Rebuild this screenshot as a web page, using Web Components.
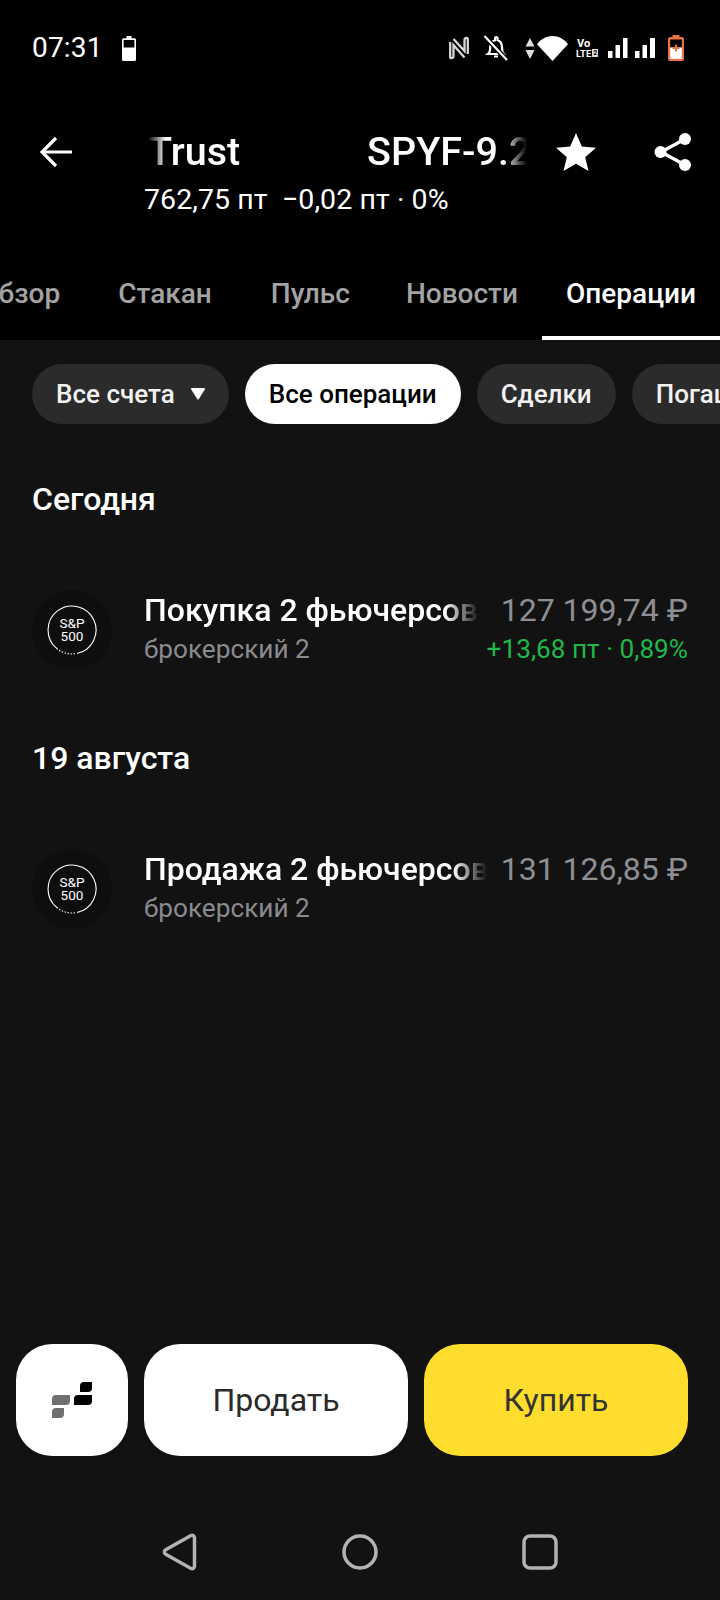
<!DOCTYPE html>
<html lang="ru"><head><meta charset="utf-8"><title>SPYF</title>
<style>
html,body{margin:0;padding:0;background:#121212}
body{width:720px;height:1600px;overflow:hidden;font-family:Roboto,"Liberation Sans",sans-serif;color:#fff}
#app{display:flex;flex-direction:column;width:720px;height:1600px}
</style></head><body>
<div id="app">
<status-bar></status-bar>
<instrument-header></instrument-header>
<tab-strip>
<tab-item style="margin-right:10px">Обзор</tab-item><tab-item style="margin-right:11px">Стакан</tab-item><tab-item style="margin-right:8px">Пульс</tab-item><tab-item>Новости</tab-item><tab-item active>Операции</tab-item>
</tab-strip>
<ops-body>
<chip-row>
<filter-chip caret>Все счета</filter-chip><filter-chip active>Все операции</filter-chip><filter-chip>Сделки</filter-chip><filter-chip>Погашения</filter-chip>
</chip-row>
<day-title>Сегодня</day-title>
<op-row title-text="Покупка 2 фьючерсов" amount="127 199,74 ₽" sub="брокерский 2" delta="+13,68 пт · 0,89%"></op-row>
<day-title second>19 августа</day-title>
<op-row style="--gap:14px" title-text="Продажа 2 фьючерсов" amount="131 126,85 ₽" sub="брокерский 2"></op-row>
</ops-body>
<action-bar></action-bar>
<nav-bar></nav-bar>
</div>
<script>
function def(name, html){
  customElements.define(name, class extends HTMLElement{
    constructor(){super();const r=this.attachShadow({mode:'open'});if(typeof html!=='function')r.innerHTML=html;}
    connectedCallback(){
      if(typeof html==='function'&&!this._d){this._d=1;this.shadowRoot.innerHTML=html(this);}
    }
  });
}
def('status-bar',`<style>
:host{display:flex;align-items:center;height:96px;background:#000;padding:0 36px 0 32px;box-sizing:border-box;flex:none}
.t{font:400 28px/32px Roboto,sans-serif;color:#fff;letter-spacing:.2px}
svg{display:block;flex:none}
.b{margin-left:19px}
.sp{flex:1}
.v{flex:none;width:22px;margin:0 10px 0 8px;color:#fff;display:flex;flex-direction:column;align-items:flex-start;line-height:9px}
.v i{font:700 11px/10px Roboto,sans-serif;margin-left:1px}
.v b{font:700 9.500px/9px Roboto,sans-serif;display:flex;gap:1px;align-items:center}
.v u{text-decoration:none;background:#ddd;color:#000;font-size:7px;line-height:8px;padding:0 1px}
</style>
<span class="t">07:31</span>
<svg class="b" width="14" height="25" viewBox="0 0 14 25"><path fill="#fff" d="M4.500 0h5v2.200H12.500a1.500 1.500 0 0 1 1.500 1.500V23.500a1.500 1.500 0 0 1-1.500 1.500H1.500A1.500 1.500 0 0 1 0 23.500V3.700A1.500 1.500 0 0 1 1.500 2.200H4.500z"/><rect x="1.600" y="4" width="10.800" height="7.500" fill="#000"/></svg>
<span class="sp"></span>
<svg width="20" height="24" viewBox="0 0 20 24" style="margin-right:14px"><path d="M4.500 3 15.500 15V4a2.200 2.200 0 0 1 2-2.200c.8 0 1.300.6 1.300 1.500V18M15.500 21.500 4.500 9v11a2.200 2.200 0 0 1-2 2.200c-.8 0-1.300-.6-1.300-1.500V6" fill="none" stroke="#d8d8d8" stroke-width="2.300"/></svg>
<svg width="25" height="26" viewBox="0 0 25 26" style="margin-right:17px"><path d="M5 19c2-1.500 2.200-3.500 2.200-6.500C7.200 8.500 9 6 12 5.200V3.500a1.300 1.300 0 0 1 2.600 0v1.700C17.500 6 19 8.500 19 12.500c0 3 .4 5 1.800 6.500zM11 21.500h4" fill="none" stroke="#fff" stroke-width="2.200"/><path d="M1.500 1 24 25" stroke="#000" stroke-width="5"/><path d="M1.500 1 24 25" stroke="#fff" stroke-width="2.200"/></svg>
<svg width="10" height="21" viewBox="0 0 10 21" style="margin-right:2px"><path fill="#ddd" d="M5 0l4.500 8.500h-9zM.5 12h9L5 21z"/></svg>
<svg width="31" height="25" viewBox="0 0 31 25"><path fill="#fff" d="M15.500 25 0 8.300C3.500 3.200 9.500 0 15.500 0s12 3.200 15.500 8.300z"/></svg>
<span class="v"><i>Vo</i><b>LTE<u>2</u></b></span>
<svg width="48" height="21" viewBox="0 0 48 21" style="margin-right:12px"><g fill="#fff"><rect x="0" y="13" width="4.500" height="7"/><rect x="7.500" y="7" width="4.500" height="13"/><rect x="15" y="0" width="4.500" height="20"/><rect x="27" y="13" width="4.500" height="7"/><rect x="34.500" y="7" width="4.500" height="13"/><rect x="42" y="0" width="5" height="20"/></g></svg>
<svg width="16" height="26" viewBox="0 0 16 26"><path fill="#e8734a" d="M4.500 0h7v2h2.500A2 2 0 0 1 16 4v20a2 2 0 0 1-2 2H2a2 2 0 0 1-2-2V4a2 2 0 0 1 2-2h2.500z"/><rect x="2.200" y="4.500" width="11.600" height="8" fill="#000"/><rect x="2.200" y="12.500" width="11.600" height="11.300" fill="#fff"/><path d="M8 9.500v7M4.500 13h7" stroke="#e8734a" stroke-width="2.200"/></svg>`);

def('instrument-header',`<style>
:host{display:grid;grid-template-columns:148px 379px 1fr;grid-template-rows:60px 36px;background:#000;height:154px;flex:none;box-sizing:border-box;padding-top:26px;align-content:start}
.back{grid-row:1;grid-column:1;display:flex;align-items:center;padding-left:40px}
.title{grid-row:1;grid-column:2;overflow:hidden;display:flex;gap:127px;align-items:center;white-space:nowrap;font:500 39.500px/60px Roboto,sans-serif;color:#fff;
 -webkit-mask-image:linear-gradient(90deg,transparent 0,#000 18px,#000 calc(100% - 24px),transparent 100%);mask-image:linear-gradient(90deg,transparent 0,#000 18px,#000 calc(100% - 24px),transparent 100%)}
.acts{grid-row:1;grid-column:3;display:flex;align-items:center;justify-content:space-between;padding:0 28px 0 29px}
.sub{grid-row:2;grid-column:2 / 4;font:400 28.500px/36px Roboto,sans-serif;color:#fff;white-space:pre;margin-left:-4px;letter-spacing:.08px}
svg{display:block}
</style>
<div class="back"><svg width="33" height="32" viewBox="0 0 33 32"><path d="M32 16H3M16 2 2 16l14 14" fill="none" stroke="#fff" stroke-width="3.200"/></svg></div>
<div class="title"><span>Trust</span><span>SPYF-9.22</span></div>
<div class="acts">
<svg width="40" height="38" viewBox="0 0 40 38"><path fill="#fff" d="M20 0l5.800 13.600 14.200 1.200-10.800 9.400 3.300 13.800L20 30.700 7.500 38l3.300-13.800L0 14.800l14.200-1.200z"/></svg>
<svg width="38" height="40" viewBox="0 0 38 40"><path d="M31 7 7 20l24 13" fill="none" stroke="#fff" stroke-width="3.200"/><circle cx="31" cy="7" r="6" fill="#fff"/><circle cx="6.500" cy="20" r="6" fill="#fff"/><circle cx="31" cy="33" r="6" fill="#fff"/></svg>
</div>
<div class="sub">762,75 пт  −0,02 пт · 0%</div>`);

def('tab-strip',`<style>
:host{display:flex;justify-content:flex-end;overflow:hidden;background:#000;height:90px;flex:none;box-sizing:border-box}
</style><slot></slot>`);
def('tab-item',`<style>
:host{display:flex;flex:none;box-sizing:border-box;height:90px;padding:0 24px 2px;align-items:center;font:500 28px/32px Roboto,sans-serif;color:#a3a3a3}
:host([active]){color:#fff;padding:2px 0 0;border-bottom:4px solid #fff;width:178px;justify-content:center}
</style><slot></slot>`);

def('ops-body',`<style>:host{display:flex;flex-direction:column;flex:1;min-height:0;background:#121212}</style><slot></slot>`);
def('chip-row',`<style>:host{display:flex;gap:16px;overflow:hidden;padding:24px 0 0 32px;flex:none}</style><slot></slot>`);
def('filter-chip',el=>`<style>
:host{display:flex;flex:none;align-items:center;height:60px;box-sizing:border-box;padding:0 24px;border-radius:30px;background:#2b2b2b;color:#f2f2f2;font:500 26px/30px Roboto,sans-serif}
:host([active]){background:#fff;color:#000}
svg{margin-left:16px;display:block}
</style><slot></slot>${el.hasAttribute('caret')?'<svg width="14" height="12" viewBox="0 0 14 12"><path fill="#fff" d="M1 0h12a1 1 0 0 1 .8 1.500L7.800 11a1 1 0 0 1-1.600 0L.2 1.500A1 1 0 0 1 1 0z"/></svg>':''}`);
def('day-title',`<style>:host{display:block;font:500 32px/36px Roboto,sans-serif;color:#fff;margin:57px 0 0 32px}
:host([second]){margin-top:70px}</style><slot></slot>`);
def('sp-logo',`<style>:host{display:grid;flex:none;width:80px;height:80px;border-radius:50%;background:#0e0e0e;place-items:center}
svg,span{grid-area:1/1}
svg{display:block}
span{text-align:center;font:400 13.500px/13px Roboto,sans-serif;color:#fff}
</style><svg width="50" height="50" viewBox="0 0 50 50" fill="none" stroke="#fff" stroke-width="1.100"><path d="M10.100 43.800A24 24 0 1 1 30 48.500"/><path d="M28 48.800A24 24 0 0 1 10.100 43.800" stroke-dasharray="1.500 1.500"/></svg><span>S&amp;P<br>500</span>`);
def('op-row',el=>`<style>
:host{display:flex;align-items:center;margin:73px 32px 0 32px;height:80px;gap:32px}
.m{flex:1;min-width:0;display:flex;flex-direction:column}
.top{display:flex;gap:var(--gap,22px);align-items:center;height:38px}
.tt{flex:1;min-width:0;overflow:hidden;white-space:nowrap;font:500 32px/38px Roboto,sans-serif;color:#fff;
 -webkit-mask-image:linear-gradient(90deg,#000 calc(100% - 34px),transparent 100%);mask-image:linear-gradient(90deg,#000 calc(100% - 34px),transparent 100%)}
.am{flex:none;font:400 32px/38px Roboto,sans-serif;color:#8e8f94;white-space:nowrap}
.bot{display:flex;justify-content:space-between;align-items:center;height:40px;font:400 26.200px/40px Roboto,sans-serif;color:#8a8b90}
.d{color:#1fb84a}
</style><sp-logo></sp-logo><div class="m"><div class="top"><div class="tt">${el.getAttribute('title-text')||''}</div><div class="am">${el.getAttribute('amount')||''}</div></div>
<div class="bot"><span>${el.getAttribute('sub')||''}</span>${el.getAttribute('delta')?`<span class="d">${el.getAttribute('delta')}</span>`:''}</div></div>`);

def('action-bar',`<style>
:host{display:grid;grid-template-columns:112px 264px 264px;gap:16px;padding:0 32px 0 16px;height:112px;flex:none;background:#121212}
.b{border-radius:36px;background:#fff;color:#2a2a2a;display:flex;align-items:center;justify-content:center;font:400 32px/36px Roboto,sans-serif}
.y{background:#ffdd2d;color:#333}
</style>
<div class="b"><svg width="40" height="36" viewBox="0 0 40 36"><path fill="#000" d="M32 0h8v6a4 4 0 0 1-4 4h-8V4a4 4 0 0 1 4-4zM26 13h14v6a4 4 0 0 1-4 4H22v-6a4 4 0 0 1 4-4z"/><path fill="#6f6f6f" d="M4 13h14v6a4 4 0 0 1-4 4H0v-6a4 4 0 0 1 4-4zM4 26h8v6a4 4 0 0 1-4 4H0v-6a4 4 0 0 1 4-4z"/></svg></div>
<div class="b">Продать</div><div class="b y">Купить</div>`);

def('nav-bar',`<style>
:host{display:flex;justify-content:space-between;align-items:flex-start;height:144px;flex:none;box-sizing:border-box;padding:76px 162px 0;background:#121212}
svg{display:block}
</style>
<svg width="36" height="40" viewBox="0 0 36 40"><path d="M29 3.500 3.700 17.800a2.500 2.500 0 0 0 0 4.400L29 36.500a2.500 2.500 0 0 0 3.500-2.200V5.700A2.500 2.500 0 0 0 29 3.500z" fill="none" stroke="#b3b3b3" stroke-width="3.500"/></svg>
<svg width="36" height="36" viewBox="0 0 36 36" style="margin-top:2px"><circle cx="18" cy="18" r="16" fill="none" stroke="#b3b3b3" stroke-width="3.500"/></svg>
<svg width="36" height="36" viewBox="0 0 36 36" style="margin-top:2px"><rect x="2" y="2" width="32" height="32" rx="6" fill="none" stroke="#b3b3b3" stroke-width="3.500"/></svg>`);
</script>
</body></html>
